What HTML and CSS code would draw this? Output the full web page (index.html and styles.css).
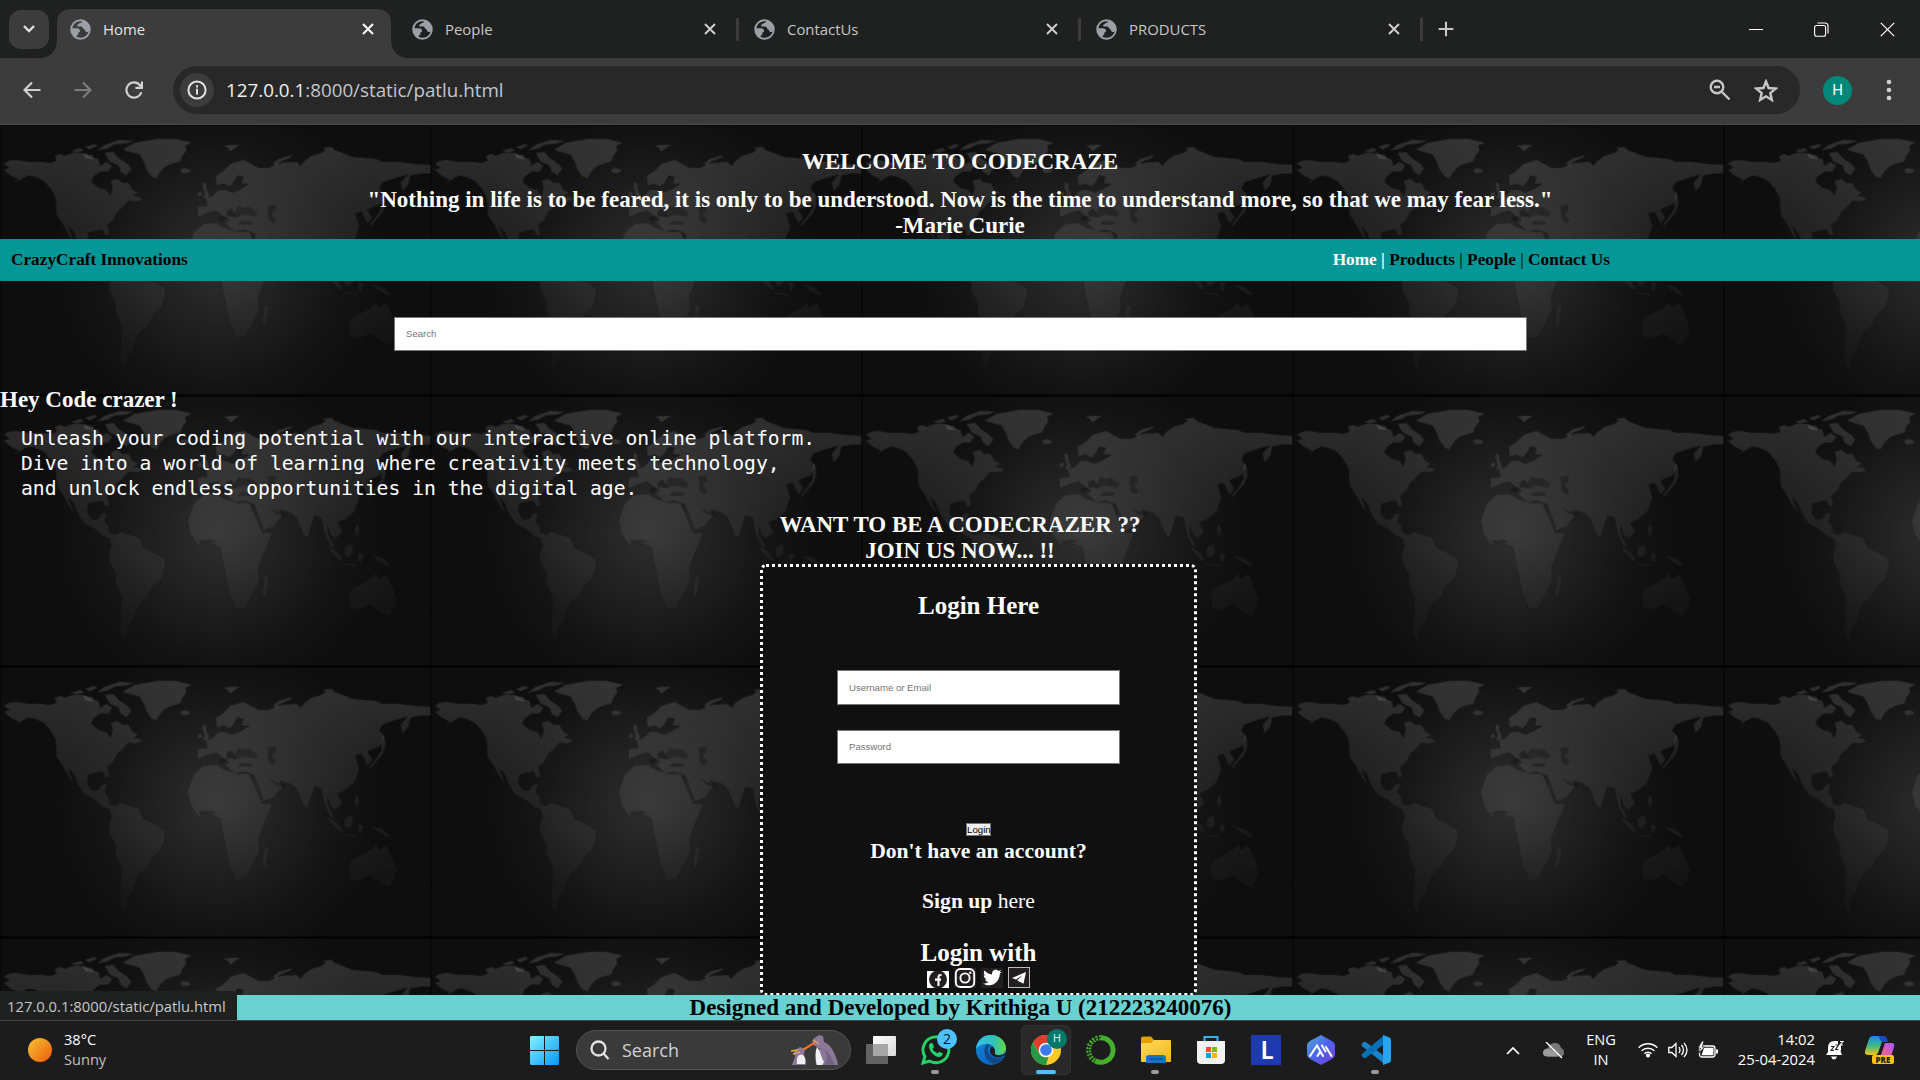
FILE: index.html
```html
<!DOCTYPE html>
<html lang="en">
<head>
<meta charset="utf-8">
<title>Home</title>
<link rel="stylesheet" href="styles.css">
</head>
<body>
<svg class="defs" width="0" height="0" aria-hidden="true">
  <defs>
    <symbol id="globe" viewBox="0 0 24 24">
      <circle cx="12" cy="12" r="10.6" fill="none" stroke="#9aa0a6" stroke-width="2.2"/>
      <path fill="#9aa0a6" d="M14 1.500c.3 2.300-1 3-2.500 3.200-1.300.2-1.300 1.500-2.500 1.700-1.200.3-1.300 1.500-.3 2 1 .5 3 .1 4.500.3 1.500.3 1.300 2.200 2.600 2.800 1.300.6 1.200 2.300 2.400 3 1.500.8 3.300-.3 4.300-1.500l.5-3-3-6z"/>
      <path fill="#9aa0a6" d="M1.500 10.500h6.300c2.300 0 3.700 1.300 3.700 3.200 0 1-.8 1.500-2 1.600v2.700c-1.500 0-2 .8-2 2.800l1.500 2-4-2-4-6z"/>
    </symbol>
    <symbol id="cross" viewBox="0 0 12 12"><path d="M1 1l10 10M11 1L1 11" fill="none" stroke="currentColor" stroke-width="1.9"/></symbol>
    <symbol id="indicator" viewBox="0 0 8 4"><rect width="8" height="4" rx="2" fill="#9a9a9a"/></symbol>
  </defs>
</svg>

<header class="browser">
  <div class="tabstrip">
    <button class="tab-list"><svg width="14" height="10" viewBox="0 0 14 10"><path d="M2 2l5 5 5-5" fill="none" stroke="#e3e3e3" stroke-width="2.300"/></svg></button>
    <div class="tab active"><svg class="fav"><use href="#globe"/></svg><span>Home</span><svg class="close"><use href="#cross"/></svg></div>
    <div class="tab"><svg class="fav"><use href="#globe"/></svg><span>People</span><svg class="close"><use href="#cross"/></svg></div>
    <div class="tab divided"><svg class="fav"><use href="#globe"/></svg><span>ContactUs</span><svg class="close"><use href="#cross"/></svg></div>
    <div class="tab divided"><svg class="fav"><use href="#globe"/></svg><span>PRODUCTS</span><svg class="close"><use href="#cross"/></svg></div>
    <div class="new-tab"><svg width="16" height="16" viewBox="0 0 16 16"><path d="M8 .7v14.600M.7 8h14.600" stroke="#c7c7c7" stroke-width="2.100"/></svg></div>
    <div class="window-controls">
      <svg width="14" height="14" viewBox="0 0 14 14"><path d="M0 7.500h14" stroke="#fff"/></svg>
      <svg width="15" height="15" viewBox="0 0 15 15" fill="none" stroke="#fff" stroke-width="1.100"><rect x=".6" y="3.500" width="11" height="10.800" rx="2"/><path d="M3.500 1h7.500a3 3 0 0 1 3 3v7.500"/></svg>
      <svg width="15" height="15" viewBox="0 0 15 15"><path d="M.8.8l13.400 13.400M14.200.8L.8 14.200" stroke="#fff" stroke-width="1.200"/></svg>
    </div>
  </div>
  <div class="toolbar">
    <div class="nav-buttons">
      <svg width="18" height="18" viewBox="0 0 18 18" fill="none" stroke="#d0d0d0" stroke-width="2.200"><path d="M17.500 9H2M9 1.500L1.500 9 9 16.500"/></svg>
      <svg width="18" height="18" viewBox="0 0 18 18" fill="none" stroke="#7b7b7b" stroke-width="2.200"><path d="M.5 9H16M9 1.500L16.500 9 9 16.500"/></svg>
      <svg width="18" height="18" viewBox="0 0 18 18" fill="none" stroke="#d0d0d0" stroke-width="2.200"><path d="M16.300 11.200A7.600 7.600 0 1 1 15 4.300L16.800 6.500M17 .5v6.300h-6.600"/></svg>
    </div>
    <div class="address">
      <span class="info"><svg width="20" height="20" viewBox="0 0 20 20"><circle cx="10" cy="10" r="8.600" fill="none" stroke="#e3e3e3" stroke-width="2"/><path d="M10 8.800v5.700M10 5.200v2.200" stroke="#e3e3e3" stroke-width="2"/></svg></span>
      <span class="url"><b>127.0.0.1</b>:8000/static/patlu.html</span>
      <svg class="lens" width="22" height="22" viewBox="0 0 22 22" fill="none" stroke="#c7c7c7" stroke-width="2.400"><circle cx="8" cy="8" r="6.300"/><path d="M12.500 12.500l8 8M5 8h6"/></svg>
      <svg width="24" height="23" viewBox="0 0 24 23" fill="none" stroke="#c7c7c7" stroke-width="2.400"><path d="M12 2.500l2.600 6.500 7 .6-5.300 4.500 1.600 6.900-5.900-3.700L6.100 21l1.600-6.900L2.400 9.600l7-.6z"/></svg>
    </div>
    <span class="avatar">H</span>
    <svg class="kebab" width="6" height="22" viewBox="0 0 6 22" fill="#d0d0d0"><circle cx="3" cy="3" r="2.300"/><circle cx="3" cy="11" r="2.300"/><circle cx="3" cy="19" r="2.300"/></svg>
  </div>
</header>

<main class="page">
  <svg class="world" width="1920" height="895" aria-hidden="true">
    <defs>
      <radialGradient id="glow" gradientUnits="userSpaceOnUse" cx="218" cy="138" r="175">
        <stop offset="0" stop-color="#343434"/><stop offset=".35" stop-color="#252525"/><stop offset=".7" stop-color="#161616"/><stop offset="1" stop-color="#0f0f0f"/>
      </radialGradient>
      <linearGradient id="land" x1="0" y1="0" x2="0" y2="271" gradientUnits="userSpaceOnUse">
        <stop offset="0" stop-color="#fff" stop-opacity=".17"/><stop offset=".3" stop-color="#fff" stop-opacity=".1"/><stop offset=".5" stop-color="#fff" stop-opacity=".07"/><stop offset=".75" stop-color="#fff" stop-opacity=".035"/><stop offset="1" stop-color="#fff" stop-opacity=".005"/>
      </linearGradient>
      <pattern id="weave" width="2" height="2" patternUnits="userSpaceOnUse"><path d="M0 0h1v1H0zM1 1h1v1H1z" fill="#000" fill-opacity=".22"/></pattern>
      <pattern id="map" x=".5" y=".7" width="431" height="271" patternUnits="userSpaceOnUse">
        <rect width="431" height="271" fill="#101010"/>
        <rect width="431" height="271" fill="url(#glow)"/>
        <g fill="url(#land)" stroke="#000" stroke-opacity=".25" stroke-width=".8">
          <path d="M3 38L8 35 15 34 28 36 40 36 50 37 56 35 54 30 60 28 64 30 72 27 84 27 90 31 98 33 100 40 106 36 112 40 108 46 100 46 93 51 91 56 98 62 106 64 110 70 112 62 110 55 117 53 122 57 128 57 132 64 138 67 133 70 139 71 142 74 135 76 128 75 122 82 117 86 113 94 107 99 109 109 105 110 102 104 96 105 88 107 87 116 92 123 98 122 101 117 107 116 104 125 108 129 109 136 115 138 120 135 126 137 139 141 143 151 154 156 165 163 164 173 161 182 153 189 148 199 140 206 136 213 133 223 128 231 125 239 127 247 122 244 119 236 120 220 121 201 115 187 115 177 109 166 108 158 111 149 109 142 102 139 94 132 84 127 78 118 73 106 68 101 74 117 68 109 62 98 56 89 55 72 50 63 43 55 34 51 28 50 22 53 13 59 18 54 10 50 3 44 9 42z"/>
          <path d="M122 24L134 17 157 13 175 13 192 17 185 20 186 25 182 30 180 36 172 38 165 41 160 46 156 53 151 51 146 44 143 36 139 29 128 26z"/>
          <path d="M96 25L104 19 119 14 134 15 125 18 114 19 107 23zM70 25l10-3 4 3-8 2zM84 21l10-3 3 2-8 4zM104 27l9-1 5 6 9 6 4 5-5 7-6-4-2-6-9-4zM82 28l10 1 2 5-9-1z"/>
          <path d="M179 44l5-2 6 2-1 3-7 1zM222 20l8-1 10 0-5 3-5 4-3-4zM197 67l4-2 1 5-5 1zM202 56l4 2 0 5 3 6-1 4-6 0 2-5-2-6zM272 38l6-5 14-4-2 3-10 4-4 5z"/>
          <path d="M197 92L197 81 207 80 205 73 212 70 218 64 225 64 232 67 241 63 249 58 241 58 243 51 237 50 233 57 229 61 223 58 216 60 215 50 222 46 230 38 243 34 258 42 268 42 281 37 296 36 300 40 304 35 311 30 321 27 325 24 322 22 331 21 334 24 347 29 352 31 375 33 382 36 398 36 414 38 430 39 430 48 420 48 410 50 408 59 402 66 400 57 407 49 393 53 382 57 379 63 384 69 379 79 371 82 367 84 372 92 367 98 361 86 355 88 359 101 354 115 344 123 337 126 342 135 335 142 330 138 327 129 328 139 335 151 330 150 324 137 321 121 314 119 307 141 303 138 296 121 290 116 279 113 282 119 273 130 262 134 255 120 252 107 243 104 234 106 229 101 222 96 227 90 235 91 231 83 226 86 228 95 216 85 208 87z"/>
          <path d="M193 107L203 98 216 97 224 102 238 106 249 106 257 124 262 136 272 136 263 158 258 171 259 184 251 200 245 211 236 213 229 198 227 188 222 164 220 151 211 147 198 149 190 138 187 124z"/>
          <path d="M264 178l5 3-4 20-4-2zM382 65l3 7 0 8-3 7-7 8-5 6-1-2 7-9 5-8-1-7z"/>
          <path d="M370 182L376 176 378 182 386 177 391 188 397 203 394 212 389 220 382 217 375 212 370 208 359 213 350 212 348 200 350 193z"/>
          <path d="M327 148l11 8 5 8-4 0-9-9zM344 151l7-4 2 8-4 6-5-2zM357 156l7 2-3 4 1 5-4-3zM370 158l12 3 10 9-7-1-9-6zM343 166l15 2-2 2-13-2zM356 126l3 6-2 9-3-7zM420 222l5-7 1 3-7 9-5 4z"/>
        </g>
        <g fill="#000" fill-opacity=".27">
          <path d="M233 88l5-8 5 2 6-1 8 6-2 4-12-2-8 3zM267 80l8-1 0 6-4 3 5 6-3 4-5-4zM251 108l10 24 2-1-9-24zM268 110l7 7 10 3-1-3-9-3zM198 144l12-1 6 2-15 3zM217 94l8 4 3-3-4-5-4 1zM237 99l14 0 2-3-12-1z"/>
        </g>
        <rect width="431" height="271" fill="url(#weave)"/>
        <path d="M0 269.800h431" stroke="#000" stroke-width="2"/>
        <path d="M430.500 0v271" stroke="#000" stroke-opacity=".75"/>
      </pattern>
    </defs>
    <rect width="1920" height="895" fill="url(#map)"/>
  </svg>

  <h3 class="welcome">WELCOME TO CODECRAZE</h3>
  <h3 class="quote">"Nothing in life is to be feared, it is only to be understood. Now is the time to understand more, so that we may fear less."<br>-Marie Curie</h3>
  <nav class="navbar">
    <span>CrazyCraft Innovations</span>
    <div class="links"><span class="current">Home |</span> Products <i>|</i> People <i>|</i> Contact Us</div>
  </nav>
  <input class="field search" type="text" placeholder="Search">
  <h3 class="hey">Hey Code crazer !</h3>
  <pre class="intro">Unleash your coding potential with our interactive online platform.
Dive into a world of learning where creativity meets technology,
and unlock endless opportunities in the digital age.</pre>
  <h3 class="join">WANT TO BE A CODECRAZER ??<br>JOIN US NOW... !!</h3>
  <section class="login">
    <h2>Login Here</h2>
    <input class="field user" type="text" placeholder="Username or Email">
    <input class="field pass" type="text" placeholder="Password">
    <button class="submit">Login</button>
    <p class="account">Don't have an account?</p>
    <p class="signup"><b>Sign up</b> here</p>
    <h2 class="with">Login with</h2>
    <div class="social">
      <svg width="22" height="17" viewBox="0 0 22 17"><path fill="#fff" d="M0 0h22v17H0z"/><circle cx="11" cy="8.500" r="9" fill="#231f20"/><path d="M11.500 15V6.500c0-2 .8-2.800 3-2.500M8 8.600h6" fill="none" stroke="#fff" stroke-width="2.100"/></svg>
      <svg width="22" height="20" viewBox="0 0 22 20"><path fill="#231f20" d="M0 0h22v20H0z"/><g fill="none" stroke="#fff" stroke-width="1.900"><rect x="1.800" y="1" width="18.400" height="18" rx="4.500"/><circle cx="11" cy="10" r="4.600"/></g><circle cx="16.300" cy="4.800" r="1.200" fill="#fff"/></svg>
      <svg width="22" height="20" viewBox="0 0 22 20"><path fill="#231f20" d="M0 0h22v20H0z"/><path fill="#fff" d="M2 15.500c2.500.1 4.300-.5 5.500-1.500-1.900-.2-2.900-1.200-3.400-2.600h1.700C4 10.800 2.800 9.300 2.800 7.300l1.700.5C2.700 6.300 2.400 4.300 3.500 2.600c2 2.400 4.500 3.700 7.500 3.900-.6-5 4.300-6 6.500-3.500l2.600-1-1.500 2.300 2-.5-1.800 2C18.800 14.500 10 20.500 2 15.500z"/></svg>
      <svg width="22" height="21" viewBox="0 0 22 21"><rect x=".5" y=".5" width="21" height="20" fill="#231f20" stroke="#bbb"/><path fill="#fff" d="M18 5L4 11l4 1.600 6.500-4.400-5.300 5.300 6.300 3.200z"/></svg>
    </div>
  </section>
  <footer class="credit">Designed and Developed by Krithiga U (212223240076)</footer>
  <div class="status">127.0.0.1:8000/static/patlu.html</div>
</main>

<footer class="taskbar">
  <div class="weather">
    <svg width="24" height="24" viewBox="0 0 24 24"><defs><linearGradient id="sun" x1="0" y1="0" x2="1" y2="1"><stop offset=".1" stop-color="#f3b92f"/><stop offset="1" stop-color="#f05a0a"/></linearGradient></defs><circle cx="12" cy="12" r="12" fill="url(#sun)"/></svg>
    <div class="reading">38°C<br><span>Sunny</span></div>
  </div>
  <svg class="start" width="29" height="29" viewBox="0 0 29 29"><defs><linearGradient id="win" x1="0" y1="0" x2="29" y2="29" gradientUnits="userSpaceOnUse"><stop offset="0" stop-color="#80f5ff"/><stop offset="1" stop-color="#0796ff"/></linearGradient></defs><path fill="url(#win)" d="M1 0h13v14H0V1zM15 0h13l1 1v13H15zM0 15h14v14H1l-1-1zM15 15h14v13l-1 1H15z"/></svg>
  <div class="task-search">
    <svg width="20" height="20" viewBox="0 0 20 20" fill="none" stroke="#e4e4e4" stroke-width="2.300"><circle cx="8.500" cy="8.500" r="7"/><path d="M13.500 13.500L18.500 19"/></svg>
    <span>Search</span>
    <svg width="50" height="32" viewBox="0 0 50 32"><path fill="#8b7798" d="M3 31l3-8-1-6 6-4 5 2-1 6 2 10z"/><path fill="#eee" d="M8 30c-1-7 2-11 6-9 3 3 3 6 2 9z"/><path fill="#8b7798" d="M27 31c-1-8 1-13 4-16L23 10 24 5l6-4 4 1 1 6c7 3 10 9 13 18l1 5z"/><path fill="#756386" d="M34 15c6 5 4 12 1 16h11c-4-8-6-14-12-16z"/><path fill="#f0f0f4" d="M28 13c4 4 4 11 7 15l-2 3h-5c-2-6-2-13 0-18z"/><path fill="#f6712b" d="M13 15l12-7 2 1-11 7z"/><path stroke="#dfa84b" stroke-width="1.500" d="M2 17l7-1M4 20l7-2M24 6l6 4"/></svg>
  </div>
  <div class="apps">
    <div class="app"><svg width="30" height="28" viewBox="0 0 30 28"><defs><linearGradient id="tv" x2="1" y2="1"><stop stop-color="#fff"/><stop offset="1" stop-color="#d8d8d8"/></linearGradient></defs><rect y="8" width="22" height="20" rx="1" fill="#636363"/><rect x="7" width="23" height="20" rx="1" fill="url(#tv)"/><path fill="#a7a7a7" d="M7 8h15v12H7z"/></svg></div>
    <div class="app"><svg width="30" height="30" viewBox="0 0 30 30"><path d="M2 28l1.900-6.500A12.900 12.900 0 1 1 8.500 26z" fill="none" stroke="#25d366" stroke-width="2.900"/><path fill="#25d366" d="M8 10c1-2 3-3 4-1l1 3-1.500 2c1 2 3 3.500 5 4.300l1.800-1.500 3.200 1.500c1 1-1 4-4 3.700C12 21 7.500 15 8 10z"/></svg><em class="badge blue">2</em><svg class="dot"><use href="#indicator"/></svg></div>
    <div class="app"><svg width="30" height="30" viewBox="0 0 30 30"><defs><linearGradient id="e1" x2="1"><stop stop-color="#35c1f1"/><stop offset=".6" stop-color="#2fc2b5"/><stop offset="1" stop-color="#68d741"/></linearGradient><linearGradient id="e2" x2=".5" y2="1"><stop stop-color="#168bdc"/><stop offset="1" stop-color="#0a62c0"/></linearGradient></defs><circle cx="15" cy="15" r="15" fill="url(#e2)"/><path fill="url(#e1)" d="M0 14C1 5 7 0 15 0c9 0 15 7 15 13 0 5-4 7-8 7-3 0-4-1-3-3 1-4-3-8-8-8C6 9 2 11 0 14z"/><path fill="#114a8b" d="M11 9c-4 3-5 16 8 20 4-1 7-4 9-7-8 3-16 0-16-7 0-2 1-4 3-5z"/><path fill="#1c1c1c" d="M16 11c-4 4-2 10 4 11 4 1 7-1 9-2l2 6v-9c-3 4-11 4-12 2-.5-1 1.500-4-3-8z"/></svg></div>
    <div class="app running"><svg width="30" height="30" viewBox="0 0 30 30"><circle cx="15" cy="15" r="15" fill="#ffc928"/><path fill="#e33b2e" d="M2 7.500A15 15 0 0 1 28 7.500L15 8 9 19z"/><path fill="#279847" d="M2 7.500l6.500 11.300c2 3.500 6 4 9 3L15 30A15 15 0 0 1 2 7.500z"/><circle cx="15" cy="15" r="7.300" fill="#fff"/><circle cx="15" cy="15" r="5.800" fill="#3a7ced"/></svg><em class="badge teal">H</em></div>
    <div class="app"><svg width="30" height="30" viewBox="0 0 30 30" fill="none" stroke="#43b02a"><path stroke-width="5" d="M15 2.800A12.200 12.200 0 1 1 9 25.700"/><path stroke-width="5" stroke-dasharray="2 1.300" d="M15 2.800A12.200 12.200 0 0 0 9 25.700"/><path stroke="#1c1c1c" stroke-width="1" stroke-dasharray="2 2" d="M15 2.500A12.500 12.500 0 0 0 9 26"/></svg></div>
    <div class="app"><svg width="30" height="28" viewBox="0 0 30 28"><defs><linearGradient id="fo" x2="1" y2="1"><stop stop-color="#ffdb5e"/><stop offset="1" stop-color="#f7b518"/></linearGradient></defs><path fill="#dfa000" d="M0 2q0-1.500 2-1.500h8l3 3.500h7v8H0z"/><path fill="url(#fo)" d="M0 7h10l3-3h16q1 0 1 1v20q0 1-1 1H1q-1 0-1-1z"/><path fill="#1174c9" d="M5 27v-5q0-3 3-3h14q3 0 3 3v5z"/><path stroke="#084f91" stroke-width="1.300" d="M8 23h14"/></svg><svg class="dot"><use href="#indicator"/></svg></div>
    <div class="app"><svg width="30" height="30" viewBox="0 0 30 30"><path d="M8.500 6V2h13v4" fill="none" stroke="#35b7ec" stroke-width="2"/><path fill="#f1f1f1" d="M1 6h28v19q0 4-4 4H5q-4 0-4-4z"/><path fill="#f25022" d="M10 12h5v5h-5z"/><path fill="#7fba00" d="M16 12h5v5h-5z"/><path fill="#00a4ef" d="M10 18h5v5h-5z"/><path fill="#ffb900" d="M16 18h5v5h-5z"/></svg></div>
    <div class="app"><span class="l-tile">L</span></div>
    <div class="app"><svg width="28" height="30" viewBox="0 0 28 30"><defs><linearGradient id="hx" x2="1" y2="1"><stop stop-color="#55abd5"/><stop offset=".5" stop-color="#4b62ec"/><stop offset="1" stop-color="#7a3fe0"/></linearGradient></defs><path fill="url(#hx)" d="M14 0l11 6q3 2 3 4v10q0 2-3 4l-11 6-11-6q-3-2-3-4V10q0-2 3-4z"/><path d="M3 21l7-10.500 6 10.500M10.500 21l2.500-4M15 10.500l3.500 6M19 12l5.500 9" fill="none" stroke="#fff" stroke-width="2.100" stroke-linecap="round"/></svg></div>
    <div class="app"><svg width="30" height="30" viewBox="0 0 30 30"><path fill="#1685cc" d="M1 8.500l2-1.500q1-.5 2 .3L22 20v8L1 11q-1-1 0-2.500z"/><path fill="#0871b6" d="M1 21.500l2 1.500q1 .5 2-.3L22 10V1L1 19q-1 1 0 2.500z"/><path fill="#27a5ee" d="M22 0l6.500 2.500Q30 3 30 5v20q0 2-1.500 2.500L22 30z"/></svg><svg class="dot"><use href="#indicator"/></svg></div>
  </div>
  <div class="tray">
    <svg class="caret" width="14" height="9" viewBox="0 0 14 9"><path d="M1 8l6-6 6 6" fill="none" stroke="#fff" stroke-width="1.700"/></svg>
    <svg class="cloud" width="21" height="17" viewBox="0 0 21 17"><path fill="#777" d="M5 6q2-5 7-5t6 5q3 1 3 4.500 0 4-4 4H5q-5 0-5-4Q0 7 5 6z"/><path fill="#9b9b9b" d="M0 11q0-4 5-4 5 0 10 7.500H5q-5 0-5-3.500z"/><path d="M3 0l16 16" stroke="#fff" stroke-width="1.400"/></svg>
    <div class="lang">ENG<br>IN</div>
    <svg class="wifi" width="20" height="16" viewBox="0 0 20 16" fill="none" stroke="#fff" stroke-width="1.500"><path d="M.7 5.700a13.200 13.200 0 0 1 18.600 0M3.600 8.800a9 9 0 0 1 12.800 0M6.500 11.800a5 5 0 0 1 7 0"/><circle cx="10" cy="13.500" r="1.300" fill="#fff"/></svg>
    <svg class="volume" width="20" height="18" viewBox="0 0 20 18" fill="none" stroke="#fff" stroke-width="1.300"><path d="M.8 6.500h3L8 2.500v13l-4.200-4h-3zM11 6q2 3 0 6M13.500 4q4 5 0 10M16 1.800q6 7.200 0 14.400"/></svg>
    <svg class="battery" width="20" height="18" viewBox="0 0 20 18"><rect x="1.500" y="5" width="15.500" height="11" rx="2.500" fill="none" stroke="#fff" stroke-width="1.300"/><path fill="#fff" d="M6 6.800h9.500v7.500H3.500zM18 8.500h2v4h-2z"/><path fill="#fff" stroke="#1c1c1c" stroke-width=".7" d="M4 0L0 7h2.500L1 12l5.500-6H4L6 0z"/></svg>
    <div class="clock">14:02<br>25-04-2024</div>
    <svg class="bell" width="18" height="20" viewBox="0 0 18 20"><path fill="#fff" d="M2 8q0-7 6.500-7H12v4h3v5l-.5 1 1.500 4H0l2-3zM5 16.500h6q-1 3-3 3t-3-3z"/><path d="M5 6.500h3l-3 4h3M9.500 5h3L9.500 9.500h3" fill="none" stroke="#1c1c1c" stroke-width="1.100"/><path d="M14 1.500h3L14 5h3" fill="none" stroke="#fff" stroke-width="1.100"/></svg>
    <div class="copilot"><svg width="30" height="30" viewBox="0 0 30 30"><defs><linearGradient id="c1" x2="0" y2="1"><stop stop-color="#168be5"/><stop offset=".5" stop-color="#3cb98b"/><stop offset="1" stop-color="#f4c20d"/></linearGradient><linearGradient id="c2" x1="1" x2="0" y2="1"><stop stop-color="#a55af0"/><stop offset=".6" stop-color="#ec5aa5"/><stop offset="1" stop-color="#ff8a45"/></linearGradient></defs><path fill="url(#c1)" d="M8 1h11l-6 17q-1 2-3 2H3q-4 0-3-4L4 4q1-3 4-3z"/><path fill="#1a49c8" d="M14 1h5q3 0 4 6h-5q-3 0-4-6z"/><path fill="url(#c2)" d="M20 8h7q3 0 2 4l-3 10q-1 4-5 4h-7z"/></svg><em>PRE</em></div>
  </div>
</footer>
</body>
</html>
```
FILE: styles.css
```css
* { box-sizing: border-box; }
html, body { margin: 0; height: 100%; overflow: hidden; }
body { display: flex; flex-direction: column; background: #1c1c1c; font-family: "Open Sans", "Noto Sans", sans-serif; }
svg { display: block; flex: none; }
.defs { position: absolute; }
button { padding: 0; }

/* Browser frame */
.browser { height: 125px; flex: none; background: #3c3c3c; border-bottom: 1px solid #4c4c4c; }
.tabstrip { height: 58px; background: #1f2120; display: flex; align-items: center; padding-left: 9px; }
.tab-list { width: 40px; height: 39px; border: 0; border-radius: 12px; background: #3c3c3c; display: grid; place-items: center; margin-right: 8px; }
.tab { position: relative; width: 342px; height: 58px; display: flex; align-items: center; padding: 0 25px 0 13px; font-size: 14.900px; color: #c7c7c7; }
.tab span { flex: 1; padding-left: 12px; }
.tab .fav { width: 21px; height: 21px; }
.tab .close { width: 12px; height: 12px; color: #d0d0d0; }
.tab.active { width: 334px; margin-right: 8px; height: 49px; align-self: flex-end; background: #3c3c3c; border-radius: 13px 13px 0 0; color: #e3e3e3; padding: 0 17px 9px 13px; }
.tab.active .close { color: #fff; }
.tab.active::before, .tab.active::after { content: ""; position: absolute; bottom: 0; width: 16px; height: 16px; }
.tab.active::before { left: -16px; background: radial-gradient(circle at 0 0, transparent 15.500px, #3c3c3c 16px); }
.tab.active::after { right: -16px; background: radial-gradient(circle at 100% 0, transparent 15.500px, #3c3c3c 16px); }
.tab.divided::before { content: ""; position: absolute; left: -5px; top: 18px; width: 3px; height: 23px; background: #3c3c3c; border-radius: 1px; }
.new-tab { position: relative; padding-left: 13px; }
.new-tab::before { content: ""; position: absolute; left: -5px; top: -3px; width: 3px; height: 23px; background: #3c3c3c; }
.window-controls { display: flex; gap: 51px; align-items: center; margin: 0 25px 0 auto; }
.toolbar { height: 66px; display: flex; align-items: center; padding: 0 28px 2px 23px; }
.nav-buttons { display: flex; gap: 33px; width: 150px; }
.address { width: 1627px; height: 48px; border-radius: 24px; background: #282828; display: flex; align-items: center; padding: 0 22px 0 7px; }
.info { width: 34px; height: 34px; border-radius: 50%; background: #3c3c3c; display: grid; place-items: center; }
.url { flex: 1; padding-left: 12px; color: #c2c7cc; font-size: 18.800px; }
.url b { font-weight: 400; color: #f0f0f0; }
.lens { margin-right: 23px; }
.avatar { width: 29px; height: 29px; border-radius: 50%; background: #00897b; color: #fff; font: 15px/29px Roboto, sans-serif; text-align: center; margin-left: 23px; }
.kebab { margin-left: auto; }

/* Web page */
.page { position: relative; isolation: isolate; height: 895px; flex: none; overflow: hidden; display: flex; flex-direction: column; color: #fff; font-family: "Liberation Serif", "Times New Roman", serif; }
.world { position: absolute; inset: 0; z-index: -1; }
h2, h3, p { margin: 0; text-align: center; }
h3 { font-size: 23px; line-height: 26px; }
.welcome { margin-top: 24px; }
.quote { margin-top: 12px; }
.navbar { height: 42px; flex: none; padding: 0 310px 1px 11px; background: #049797; color: #000; font-size: 17.250px; font-weight: 700; display: flex; justify-content: space-between; align-items: center; }
.current { color: #fff; }
.links i { font-style: normal; font-weight: 400; }
.field { display: block; border: 1px solid #767676; border-radius: 0; background: #fff; padding: 0 11px 2px; font: 9.600px "Liberation Sans", Arial, sans-serif; height: 34px; flex: none; }
.field::placeholder { color: #757575; }
.search { width: 1133px; margin: 36px 0 36px 394px; }
.hey { text-align: left; }
.intro { margin: 13px 0 11px 21px; font: 19.700px/25px "DejaVu Sans Mono", monospace; }
.login { width: 437px; height: 432px; flex: none; margin: 0 0 0 760px; border: 3px dotted #fff; border-radius: 6px; background: #101010; display: flex; flex-direction: column; align-items: center; padding-top: 24px; }
.login h2 { font-size: 25px; line-height: 29px; }
.user, .pass { width: 283px; }
.user { height: 35px; margin: 50px 0 25px; padding-bottom: 0; }
.submit { width: 25px; height: 13px; flex: none; margin-top: 59px; border: 1px solid #767676; background: #efefef; color: #000; font: 9.700px/11px "Liberation Sans", Arial, sans-serif; white-space: nowrap; }
.account, .signup { font-size: 21.600px; line-height: 25px; }
.account { font-weight: 700; margin-top: 3px; }
.signup { margin-top: 25px; }
.login .with { margin-top: 24px; }
.social { display: flex; gap: 5px; align-items: flex-end; }
.credit { position: relative; height: 25px; margin-top: -1px; flex: none; background: #69d1cf; color: #000; font-size: 23px; line-height: 26px; font-weight: 700; text-align: center; padding-left: 1px; }
.status { position: absolute; left: 0; bottom: 0; width: 237px; height: 29px; padding-left: 7px; border-radius: 0 5px 0 0; background: #1f2120; color: #c7c7c7; font: 14.800px/30px "Open Sans", sans-serif; }

/* Taskbar */
.taskbar { height: 60px; flex: none; border-top: 1px solid #444; padding-bottom: 1px; background: #1c1c1c; color: #fff; display: flex; align-items: center; font-size: 14.600px; line-height: 20px; }
.weather { width: 530px; padding-left: 28px; display: flex; align-items: center; gap: 12px; }
.weather span { color: #c0c0c0; }
.reading, .lang, .clock { padding-bottom: 3px; }
.task-search { width: 275px; height: 40px; margin-left: 17px; border-radius: 20px; border: 1px solid #535353; background: #3a3a3a; display: flex; align-items: center; padding: 0 11px 0 13px; }
.task-search span { flex: 1; padding: 0 0 1px 12px; color: #d2d2d2; font-size: 18px; }
.apps { display: flex; margin-left: 2px; }
.app { position: relative; width: 55px; height: 50px; display: grid; place-items: center; }
.app.running::before { content: ""; position: absolute; inset: 0 2px 0 3px; border: 1px solid #333; border-radius: 6px; background: #292929; }
.app.running > svg { position: relative; }
.app.running::after { content: ""; position: absolute; left: 18px; bottom: 1px; width: 20px; height: 4px; border-radius: 2px; background: #4cc2ff; }
.app .dot { position: absolute; left: 23px; bottom: 1px; width: 8px; height: 4px; }
.badge { position: absolute; left: 29px; top: 4px; width: 20px; height: 20px; border-radius: 50%; text-align: center; font-style: normal; }
.blue { background: #4cc2ff; color: #111; font-size: 14px; }
.teal { background: #00796b; color: #d7efec; font: 11px/20px Roboto, sans-serif; }
.l-tile { width: 30px; height: 30px; background: #1d3aae; font: 700 24px/30px Lato, sans-serif; text-align: center; padding-left: 3px; }
.tray { display: flex; align-items: center; margin-left: 103px; }
.cloud { margin-left: 23px; }
.lang { width: 40px; margin-left: 17px; text-align: center; }
.wifi { margin-left: 17px; }
.volume, .battery { margin-left: 10px; }
.clock { width: 88px; margin-left: 9px; text-align: right; font-size: 14.800px; }
.bell { margin-left: 11px; }
.copilot { position: relative; margin-left: 21px; }
.copilot em { position: absolute; left: 7px; bottom: 1px; width: 22px; height: 9px; border-radius: 2px; background: #ffc20d; color: #222; font: 800 8px/9px "Open Sans", sans-serif; text-align: center; }
```
